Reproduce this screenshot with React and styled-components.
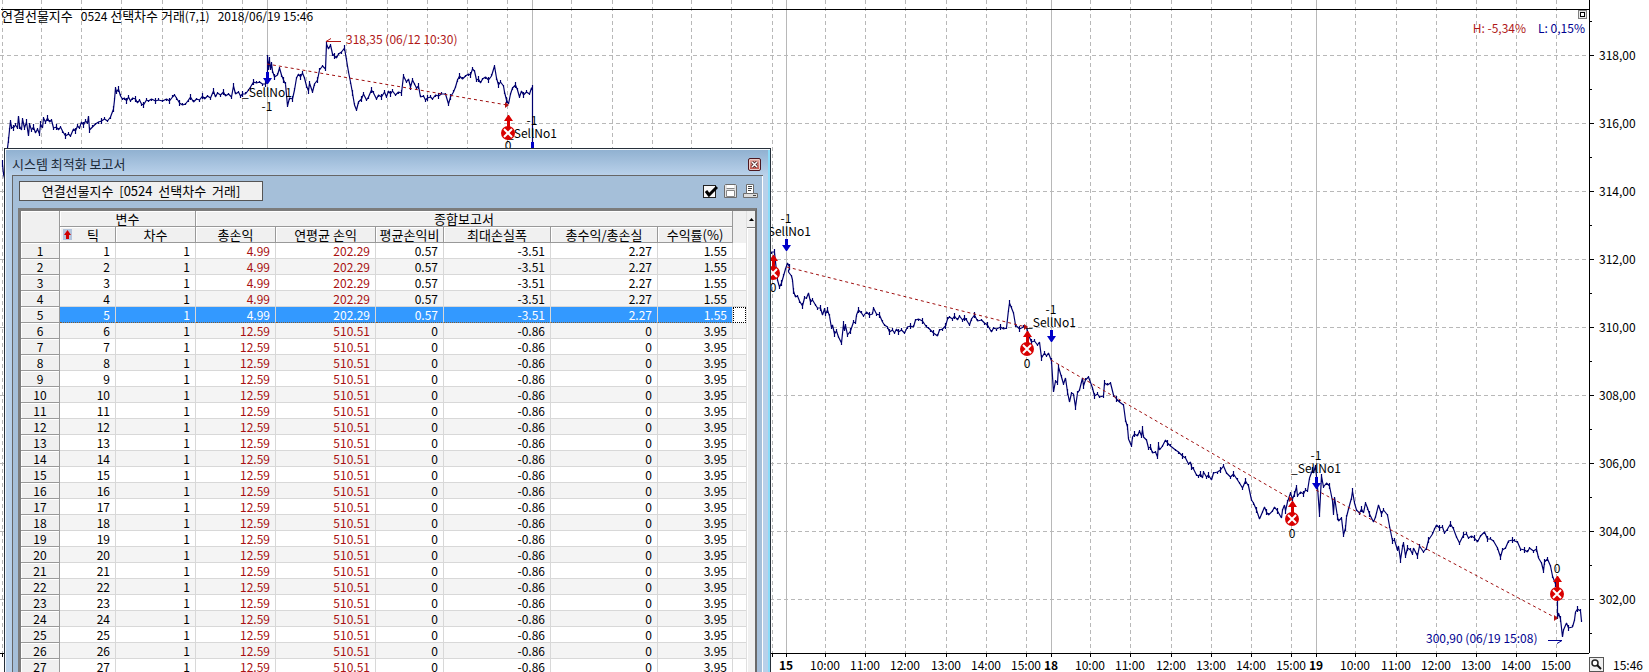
import React, { useLayoutEffect, useRef, useState } from "react";
import styled, { createGlobalStyle, css } from "styled-components";

const GlobalStyle = createGlobalStyle`
  *, *::before, *::after { box-sizing: border-box; }
  body {
    margin: 0;
    background: #fff;
    color: #000;
    font-family: "Noto Sans CJK KR", "Liberation Sans", sans-serif;
    font-size: 12px;
    line-height: 16px;
  }
`;

/* ---------- chart data (design space 1589 x 653) ---------- */

const BASE_W = 1589;
const BASE_H = 653;

const PRICE_LEFT =
  "7,148 8,140 9,130 10,121 11,127 13,128 15,125 17,128 18,116 19,126 21,130 22,119 24,128 26,122 28,136 29,124 31,130 33,127 35,133 37,129 39,134 40,124 42,128 43,118 45,122 47,118 49,122 51,120 53,128 56,127 58,130 60,127 62,131 65,136 68,134 70,136 73,129 75,131 77,126 79,128 81,122 83,125 85,121 87,123 88,116 89,130 92,127 95,124 98,122 101,121 104,119 107,121 110,117 113,109 114,100 115,88 116,92 118,89 120,96 122,99 124,98 126,101 128,97 130,101 132,98 135,99 137,103 139,100 141,104 143,105 146,100 148,101 151,99 155,101 158,100 162,101 166,99 169,101 172,97 174,95 176,98 179,103 182,105 185,104 188,100 190,97 193,102 196,99 199,100 202,96 204,99 207,96 210,98 213,91 215,97 217,93 220,95 223,92 225,96 228,94 231,97 233,86 235,94 238,92 240,96 242,94 245,94 248,90 250,87 253,82 256,83 259,82 262,84 265,84 267,82 267,56 268,68 269,60 270,70 271,63 272,71 274,77 277,75 279,68 281,75 283,80 285,84 287,106 289,98 292,99 294,90 296,78 298,74 300,77 302,73 304,78 306,86 308,91 309,83 312,92 314,84 317,80 319,70 322,66 325,69 326,44 328,49 330,45 332,54 334,56 336,58 338,54 341,52 344,48 346,60 348,72 350,82 352,93 354,105 356,110 358,102 361,99 363,94 366,100 368,97 371,90 373,93 376,99 378,95 381,97 384,92 386,97 388,91 390,94 392,91 395,95 398,92 401,93 403,76 406,82 408,79 410,87 412,80 414,84 416,88 418,86 420,97 423,96 425,100 427,98 430,97 432,99 435,95 438,96 441,94 445,94 448,104 450,97 453,92 455,87 457,80 459,76 462,79 465,76 468,74 470,75 472,69 474,71 476,80 478,79 480,83 482,79 485,77 488,80 491,76 494,66 496,78 498,85 500,82 503,86 504,92 506,100 508,104 510,94 512,88 515,85 517,90 519,97 521,91 523,95 526,92 529,94 531,88 532,88 532,150";

const PRICE_RIGHT =
  "771,252 774,252 775,262 777,280 779,287 781,283 783,276 785,269 787,263 789,267 788,272 791,276 792,280 793,291 795,297 797,296 799,301 802,306 804,298 806,298 808,293 810,302 812,300 815,305 817,308 820,308 822,315 824,309 825,314 827,310 829,316 831,328 832,325 834,334 836,331 838,337 841,343 843,324 844,331 845,325 847,335 850,331 853,322 855,323 856,315 858,310 861,313 863,316 866,312 869,315 872,314 873,308 876,314 879,315 882,322 884,325 887,327 889,332 892,330 894,333 896,329 898,332 901,330 904,333 907,327 910,326 913,327 915,320 918,319 922,321 926,327 928,328 930,330 933,333 937,336 939,330 942,329 945,326 947,319 949,317 952,319 954,316 957,320 959,316 962,320 964,318 966,320 969,325 971,319 974,315 977,321 981,320 984,323 987,325 991,332 993,328 996,329 1000,327 1003,329 1006,328 1008,310 1009,303 1011,308 1013,313 1015,325 1019,329 1023,327 1026,327 1028,335 1031,342 1034,341 1037,345 1039,342 1041,358 1044,353 1046,356 1048,353 1051,361 1053,392 1055,381 1057,383 1058,367 1061,377 1063,384 1065,378 1067,392 1069,402 1071,393 1073,394 1075,407 1077,393 1079,390 1082,378 1083,386 1085,380 1088,377 1092,388 1094,396 1097,394 1099,397 1103,396 1104,383 1107,385 1110,383 1113,395 1116,399 1119,402 1123,405 1125,420 1127,427 1128,439 1131,446 1132,437 1134,434 1137,436 1139,431 1141,436 1142,429 1143,437 1146,440 1148,448 1150,447 1152,453 1155,452 1157,457 1158,445 1159,450 1162,446 1165,440 1167,443 1170,446 1175,450 1178,452 1182,456 1185,458 1188,464 1190,462 1191,467 1193,469 1196,475 1198,476 1200,474 1202,478 1203,472 1206,477 1208,475 1211,480 1213,473 1217,472 1220,470 1223,466 1226,473 1230,477 1233,474 1237,480 1239,483 1242,488 1245,481 1248,486 1251,500 1253,503 1256,510 1259,519 1262,512 1264,507 1266,512 1268,515 1272,511 1274,507 1277,511 1281,518 1282,510 1284,505 1285,511 1287,502 1290,493 1292,499 1294,494 1296,487 1297,496 1300,492 1303,494 1305,490 1307,491 1309,478 1312,470 1313,473 1315,466 1317,487 1319,514 1321,476 1323,487 1326,483 1329,486 1332,501 1333,514 1334,497 1337,517 1338,521 1341,518 1343,535 1345,528 1346,517 1348,509 1351,498 1352,491 1354,503 1356,510 1359,513 1361,509 1363,513 1365,503 1367,508 1369,514 1373,522 1375,517 1378,505 1381,514 1383,510 1387,515 1389,526 1392,541 1394,540 1397,550 1398,546 1400,560 1402,547 1403,543 1405,556 1407,548 1410,550 1412,554 1413,548 1417,556 1419,546 1423,552 1426,548 1428,540 1432,534 1434,529 1436,525 1439,528 1442,527 1444,533 1447,529 1450,524 1453,529 1456,537 1459,543 1463,535 1466,534 1468,538 1471,536 1474,538 1477,542 1480,536 1484,532 1487,539 1490,539 1493,541 1497,548 1500,557 1502,550 1505,548 1508,541 1512,540 1514,541 1517,542 1520,549 1524,550 1527,552 1529,548 1533,551 1536,549 1538,558 1541,563 1543,571 1544,562 1547,559 1550,566 1552,576 1555,584 1557,590 1557,618 1558,613 1560,619 1562,637 1563,630 1566,623 1568,628 1572,627 1574,620 1575,612 1577,609 1580,611 1581,621";

const PRICE_EDGE = "2,160 2,164 3,174 4,178";

const HOUR_LINES = [
  2, 41, 81, 121, 162, 202, 242, 306, 346, 387, 427, 467, 507, 571, 612, 652, 691, 731, 772,
  825, 865, 905, 946, 986, 1026, 1090, 1130, 1171, 1211, 1251, 1291, 1355, 1396, 1436, 1476, 1516, 1556,
];
const DAY_LINES = [267, 532, 786, 1051, 1316];
const PRICES = ["318,00", "316,00", "314,00", "312,00", "310,00", "308,00", "306,00", "304,00", "302,00"];
const HOURS = ["10:00", "11:00", "12:00", "13:00", "14:00", "15:00"];
const TIME_LABELS = [
  ...[{ x: 786, text: "15" }, { x: 1051, text: "18" }, { x: 1316, text: "19" }].map((d) => ({ ...d, day: true })),
  ...[825, 865, 905, 946, 986, 1026].map((x, i) => ({ x, text: HOURS[i] })),
  ...[1090, 1130, 1171, 1211, 1251, 1291].map((x, i) => ({ x, text: HOURS[i] })),
  ...[1355, 1396, 1436, 1476, 1516, 1556].map((x, i) => ({ x, text: HOURS[i] })),
];
const TRADES = [
  [267, 64, 507, 105],
  [787, 267, 1026, 327],
  [1051, 360, 1291, 499],
  [1316, 490, 1556, 618],
];
const EXITS = [
  { x: 508, y: 133, label: 150 },
  { x: 773, y: 273, label: 292 },
  { x: 1027, y: 349, label: 368 },
  { x: 1292, y: 519, label: 538 },
  { x: 1557, y: 594, label: 573 },
];
const ENTRIES = [
  { x: 267, y: 84, name: 97, count: 111 },
  { x: 532, y: 154, name: 138, count: 125 },
  { x: 786, y: 251, name: 236, count: 223 },
  { x: 1051, y: 342, name: 327, count: 314 },
  { x: 1316, y: 489, name: 473, count: 460 },
];

/* ---------- chart ---------- */

const Workspace = styled.main`
  position: relative;
  display: grid;
  grid-template-columns: minmax(0, 1fr) 60px;
  grid-template-rows: minmax(0, 1fr) 19px;
  height: 100vh;
  overflow: hidden;
`;

const PlotArea = styled.section`
  position: relative;
  grid-column: 1;
  grid-row: 1;
`;

const PlotSvg = styled.svg`
  display: block;
  width: 100%;
  height: 100%;
  overflow: visible;
  text { font-size: 12px; }
`;

const PlotTitle = styled.h1`
  position: absolute;
  top: 8px;
  left: 1px;
  margin: 0;
  font-size: 13px;
  font-weight: 400;
  line-height: 16px;
  white-space: pre;
`;

const TitleFigures = styled.span`
  font-size: 12px;
`;

const PlotLegend = styled.div`
  position: absolute;
  top: 20px;
  right: 4px;
  display: flex;
  gap: 12px;
`;

const LegendItem = styled.span`
  color: ${(p) => p.$color};
`;

const PaneButton = styled.button`
  position: absolute;
  top: 10px;
  right: 2px;
  width: 9px;
  height: 9px;
  padding: 1px;
  border: 1px solid #808080;
  background: #e8e8e8;
  &::before {
    content: "";
    display: block;
    width: 5px;
    height: 5px;
    border: 1px solid #000;
    background: #fff;
  }
`;

const PriceAxis = styled.aside`
  display: grid;
  grid-template-rows: 21fr repeat(9, 68fr) 20fr;
  border-left: 1px solid #000;
  padding-left: 9px;
  &::before { content: ""; }
`;

const PriceLabel = styled.span`
  display: flex;
  align-items: center;
`;

const Corner = styled.footer`
  grid-column: 2;
  grid-row: 2;
  display: flex;
  align-items: center;
  gap: 9px;
  padding-top: 4px;
  line-height: 15px;
  white-space: nowrap;
`;

const ZoomButton = styled.button`
  display: flex;
  width: 15px;
  height: 15px;
  padding: 1px;
  border: 1px solid #555;
  background: #efefef;
`;

function ExitMarker({ x, y }) {
  return (
    <g>
      <path d={`M${x - 1},${y - 5}v-7h-3l4,-6h1l4,6h-3v7z`} fill="#d90000" />
      <circle cx={x} cy={y} r="7" fill="#d90000" />
      <path d={`M${x - 4},${y - 4}l8,8m0,-8l-8,8`} stroke="#fff" strokeWidth="2" />
    </g>
  );
}

function EntryMarker({ x, y }) {
  return <path d={`M${x - 1},${y - 12}h3v6h3l-4,6h-1l-4,-6h3z`} fill="#0000c8" />;
}

function PriceChart() {
  const ref = useRef(null);
  const [size, setSize] = useState({ w: BASE_W, h: BASE_H });

  useLayoutEffect(() => {
    const node = ref.current;
    const measure = () => setSize({ w: node.clientWidth, h: node.clientHeight });
    measure();
    const observer = new ResizeObserver(measure);
    observer.observe(node);
    return () => observer.disconnect();
  }, []);

  const sx = (x) => Math.round((x * size.w) / BASE_W);
  const sy = (y) => Math.round((y * size.h) / BASE_H);
  /* Each price is joined to the next and carries a short high-low bar. */
  const pricePath = (list) =>
    list
      .split(" ")
      .map((pair, i) => {
        const [x, y] = pair.split(",").map(Number);
        const up = (i * 7) % 4;
        const down = (i * 5 + 2) % 4;
        return `${i ? "L" : "M"}${sx(x)}.5,${sy(y)}v${-up}v${up + down}v${-down}`;
      })
      .join("");
  const { w, h } = size;

  return (
    <PlotArea ref={ref}>
      <PlotSvg role="img" aria-label="연결선물지수">
        <g stroke="#b8b8b8" shapeRendering="crispEdges">
          {HOUR_LINES.map((x) => (
            <path key={x} d={`M${sx(x)}.5,0V${h}`} strokeDasharray="4 3" />
          ))}
          {PRICES.map((p, i) => (
            <path key={p} d={`M0,${sy(55 + 68 * i)}.5H${w}`} strokeDasharray="4 3" />
          ))}
          {DAY_LINES.map((x) => (
            <path key={x} d={`M${sx(x)}.5,0V${h}`} />
          ))}
        </g>
        <g stroke="#000" shapeRendering="crispEdges">
          <path d={`M1,9.5H${w}M0,${h}.5H${w}`} />
          {[...HOUR_LINES, ...DAY_LINES].map((x) => (
            <path key={x} d={`M${sx(x)}.5,${h}v4`} />
          ))}
          {PRICES.map((p, i) => (
            <path key={p} d={`M${w},${sy(55 + 68 * i)}.5h5M${w},${sy(89 + 68 * i)}.5h3`} />
          ))}
          <path d={`M${w},${sy(21)}.5h3`} />
        </g>
        <g fill="none" stroke="#00006e" strokeWidth="1.2" strokeLinejoin="bevel">
          <path d={pricePath(PRICE_LEFT)} />
          <path d={pricePath(PRICE_RIGHT)} />
          <path d={pricePath(PRICE_EDGE)} />
        </g>
        {TRADES.map(([x1, y1, x2, y2]) => (
          <g key={x1}>
            <path d={`M${sx(x1)},${sy(y1)}L${sx(x2)},${sy(y2)}`} stroke="#a01010" strokeDasharray="3 3" />
            <path d={`M${sx(x2) - 2},${sy(y2) - 3}l4,3l-4,3z`} fill="#b01010" />
          </g>
        ))}
        {ENTRIES.map((e) => (
          <g key={e.x}>
            <EntryMarker x={sx(e.x)} y={sy(e.y)} />
            <text x={sx(e.x)} y={sy(e.name)} textAnchor="middle">_SellNo1</text>
            <text x={sx(e.x)} y={sy(e.count)} textAnchor="middle">-1</text>
          </g>
        ))}
        {EXITS.map((e) => (
          <g key={e.x}>
            <ExitMarker x={sx(e.x)} y={sy(e.y)} />
            <text x={sx(e.x)} y={sy(e.label)} textAnchor="middle">0</text>
          </g>
        ))}
        <path d={`M${sx(341)},${sy(41)}.5h-15l5,-3`} fill="none" stroke="#b01818" />
        <text x={sx(346)} y={sy(44)} fill="#b01818">318,35 (06/12 10:30)</text>
        <path d={`M${sx(1548)},${sy(640)}.5h14l-5,3`} fill="none" stroke="#000090" />
        <text x={sx(1426)} y={sy(643)} fill="#000090">300,90 (06/19 15:08)</text>
        {TIME_LABELS.map((t) => (
          <text key={t.x} x={sx(t.x)} y={h + 17} textAnchor="middle" fontWeight={t.day ? 700 : 400}>
            {t.text}
          </text>
        ))}
      </PlotSvg>
      <PlotTitle>
        연결선물지수
        <TitleFigures>{"   0524 "}</TitleFigures>
        선택차수 거래
        <TitleFigures>{"(7,1)   2018/06/19 15:46"}</TitleFigures>
      </PlotTitle>
      <PlotLegend>
        <LegendItem $color="#b01818">H: -5,34%</LegendItem>
        <LegendItem $color="#000090">L: 0,15%</LegendItem>
      </PlotLegend>
      <PaneButton aria-label="창 크기" />
    </PlotArea>
  );
}

/* ---------- report window ---------- */

const ReportWindow = styled.section`
  position: absolute;
  top: 148px;
  left: 4px;
  width: 767px;
  padding: 0 7px 8px;
  border: 1px solid #26303a;
  background: linear-gradient(#8fb0d0, #b9d1ea 26px);
  box-shadow: inset 1px 1px #f4f8fc, inset -2px 0 #8cdcf8;
`;

const TitleBar = styled.header`
  display: flex;
  align-items: center;
  justify-content: space-between;
  height: 26px;
  padding: 4px 2px 0 0;
`;

const WindowTitle = styled.h2`
  margin: 0;
  font-size: 13px;
  font-weight: 400;
  color: #1c2a38;
`;

const CloseButton = styled.button`
  display: flex;
  align-items: center;
  justify-content: center;
  width: 13px;
  height: 13px;
  padding: 0;
  border: 1px solid #4c1820;
  border-radius: 2px;
  background: linear-gradient(#e8b0a8, #c05048);
  box-shadow: inset 0 0 0 1px #eccac6;
`;

const Client = styled.div`
  padding: 5px 3px 3px 5px;
  border: 1px solid #666;
  border-width: 1px 0 0 1px;
  background: #a5bfd9;
  box-shadow: inset -1px 0 #fff;
`;

const Toolbar = styled.div`
  display: flex;
  align-items: center;
  justify-content: space-between;
  padding: 0 2px 0 1px;
`;

const StrategyButton = styled.button`
  width: 244px;
  height: 20px;
  padding: 0;
  border: 1px solid #555;
  background: #f0f0f0;
  font: inherit;
  font-size: 13px;
  line-height: 16px;
  white-space: pre;
`;

const ToolGroup = styled.div`
  display: flex;
  gap: 5px;
`;

const ToolButton = styled.button`
  display: flex;
  width: 15px;
  height: 16px;
  padding: 0;
  border: 0;
  background: none;
`;

const GridFrame = styled.div`
  display: flex;
  margin-top: 7px;
  margin-right: 3px;
  border: 3px solid #6a6a6a;
  border-top-color: #7c7c7c;
  border-left-color: #7c7c7c;
  border-right-width: 2px;
  background: #f0f0f0;
`;

const Grid = styled.table`
  flex: 1;
  border-collapse: separate;
  border-spacing: 0;
  table-layout: fixed;
  th, td {
    height: 16px;
    padding: 0;
    font-weight: 400;
    line-height: 15px;
    white-space: nowrap;
  }
  thead th { font-size: 13px; }
`;

const HeadCell = styled.th`
  border-right: 1px solid #999;
  border-bottom: 1px solid #999;
  background: #f0f0f0;
  box-shadow: inset 1px 1px #fff;
`;

const TailCell = styled.td`
  background: ${(p) => p.$fill};
  ${(p) => (p.$focus ? css`border: 1px dotted #000;` : css`border-bottom: 1px solid ${p.$line};`)}
`;

const Cell = styled.td`
  && { padding-right: 5px; }
  text-align: right;
  border-right: 1px solid #d8d8d8;
  border-bottom: 1px solid #d8d8d8;
  color: ${(p) => (p.$profit ? "#a81010" : "#000")};
`;

const Row = styled.tr`
  ${Cell} { background: ${(p) => (p.$even ? "#f4f4f4" : "#fff")}; }
  ${(p) =>
    p.$selected &&
    css`
      ${Cell} {
        background: #3399ff;
        color: #fff;
        border-bottom: 1px dotted #805a30;
      }
    `}
`;

const SortHead = styled.span`
  display: grid;
  grid-template-columns: 15px 1fr;
  align-items: center;
  padding-right: 4px;
`;

const ScrollTrack = styled.div`
  width: 9px;
  border-left: 1px solid #e0e0e0;
  background: #f0f0f0;
`;

const ScrollUp = styled.button`
  display: flex;
  align-items: center;
  justify-content: center;
  width: 8px;
  height: 17px;
  padding: 0;
  border: 0;
  border-bottom: 1px solid #777;
  background: #f0f0f0;
`;

const ScrollThumb = styled.div`
  height: 100%;
  border-left: 1px solid #fff;
  border-top: 1px solid #fff;
`;

const COLUMN_WIDTHS = [39, 56, 80, 80, 100, 68, 107, 107, 75, 13];
const ROWS = Array.from({ length: 27 }, (_, i) =>
  i < 5
    ? [i + 1, 1, "4.99", "202.29", "0.57", "-3.51", "2.27", "1.55"]
    : [i + 1, 1, "12.59", "510.51", "0", "-0.86", "0", "3.95"]
);
const SELECTED = 4;

function ReportTable() {
  return (
    <Grid>
      <colgroup>
        {COLUMN_WIDTHS.map((width, i) => (
          <col key={i} width={width} />
        ))}
      </colgroup>
      <thead>
        <tr>
          <HeadCell rowSpan={2} />
          <HeadCell colSpan={2}>변수</HeadCell>
          <HeadCell colSpan={6}>종합보고서</HeadCell>
          <TailCell rowSpan={2} $fill="#f0f0f0" $line="#f0f0f0" />
        </tr>
        <tr>
          <HeadCell>
            <SortHead>
              <svg width="15" height="11" viewBox="0 0 15 11">
                <rect x="3" y="0" width="9" height="11" fill="#b4c4dc" />
                <path d="M6,10V6H4L7.500,1L11,6H9V10z" fill="#d00000" />
              </svg>
              틱
            </SortHead>
          </HeadCell>
          <HeadCell>차수</HeadCell>
          <HeadCell>총손익</HeadCell>
          <HeadCell>연평균 손익</HeadCell>
          <HeadCell>평균손익비</HeadCell>
          <HeadCell>최대손실폭</HeadCell>
          <HeadCell>총수익/총손실</HeadCell>
          <HeadCell>수익률(%)</HeadCell>
        </tr>
      </thead>
      <tbody>
        {ROWS.map((row, i) => (
          <Row key={i} $even={i % 2 === 1} $selected={i === SELECTED}>
            <HeadCell scope="row">{i + 1}</HeadCell>
            {row.map((value, c) => (
              <Cell key={c} $profit={c === 2 || c === 3}>{value}</Cell>
            ))}
            <TailCell $focus={i === SELECTED} $fill={i % 2 === 1 ? "#f4f4f4" : "#fff"} $line="#d8d8d8" />
          </Row>
        ))}
      </tbody>
    </Grid>
  );
}

function OptimizationReport() {
  return (
    <ReportWindow aria-label="시스템 최적화 보고서">
      <TitleBar>
        <WindowTitle>시스템 최적화 보고서</WindowTitle>
        <CloseButton aria-label="닫기">
          <svg width="7" height="7" viewBox="0 0 7 7">
            <path d="M1,1L6,6M6,1L1,6" stroke="#402020" strokeWidth="3" />
            <path d="M1,1L6,6M6,1L1,6" stroke="#fff" strokeWidth="1.500" />
          </svg>
        </CloseButton>
      </TitleBar>
      <Client>
        <Toolbar>
          <StrategyButton>{"연결선물지수  [0524  선택차수  거래]"}</StrategyButton>
          <ToolGroup>
            <ToolButton aria-label="선택">
              <svg width="15" height="16" viewBox="0 0 15 16">
                <rect x="0.500" y="2.500" width="12" height="12" fill="#f8f8f8" stroke="#222" />
                <path d="M3,8L6,12L14,4" fill="none" stroke="#000" strokeWidth="3" />
              </svg>
            </ToolButton>
            <ToolButton aria-label="저장">
              <svg width="15" height="16" viewBox="0 0 15 16">
                <path d="M2.500,1.500H12.500L13.500,2.500V14.500H1.500V2.500z" fill="#e4e4e4" stroke="#6c6c6c" />
                <path d="M4,2h7v3H4z" fill="#fff" />
                <path d="M3.500,5.500h8" stroke="#888" />
                <path d="M3.500,7.500h8v6h-8z" fill="#fff" stroke="#888" />
              </svg>
            </ToolButton>
            <ToolButton aria-label="인쇄">
              <svg width="15" height="16" viewBox="0 0 15 16">
                <path d="M0.500,10.500h14v4h-14z" fill="#ddd" stroke="#6c6c6c" />
                <path d="M3.500,1.500h7v9h-7z" fill="#fff" stroke="#6c6c6c" />
                <path d="M5,3.500h4M5,5.500h4M5,7.500h3M10,12.500h3" stroke="#444" />
              </svg>
            </ToolButton>
          </ToolGroup>
        </Toolbar>
        <GridFrame>
          <ReportTable />
          <ScrollTrack>
            <ScrollUp aria-label="위로">
              <svg width="5" height="3" viewBox="0 0 5 3">
                <path d="M0,3L2.500,0L5,3z" fill="#000" />
              </svg>
            </ScrollUp>
            <ScrollThumb />
          </ScrollTrack>
        </GridFrame>
      </Client>
    </ReportWindow>
  );
}

export default function App() {
  return (
    <>
      <GlobalStyle />
      <Workspace>
        <PriceChart />
        <PriceAxis>
          {PRICES.map((p) => (
            <PriceLabel key={p}>{p}</PriceLabel>
          ))}
        </PriceAxis>
        <Corner>
          <ZoomButton aria-label="확대">
            <svg width="11" height="11" viewBox="0 0 11 11">
              <circle cx="4" cy="4" r="3" fill="#fff" stroke="#222" strokeWidth="1.500" />
              <path d="M6,6L10,10" stroke="#111" strokeWidth="2" />
            </svg>
          </ZoomButton>
          <time>15:46</time>
        </Corner>
        <OptimizationReport />
      </Workspace>
    </>
  );
}
